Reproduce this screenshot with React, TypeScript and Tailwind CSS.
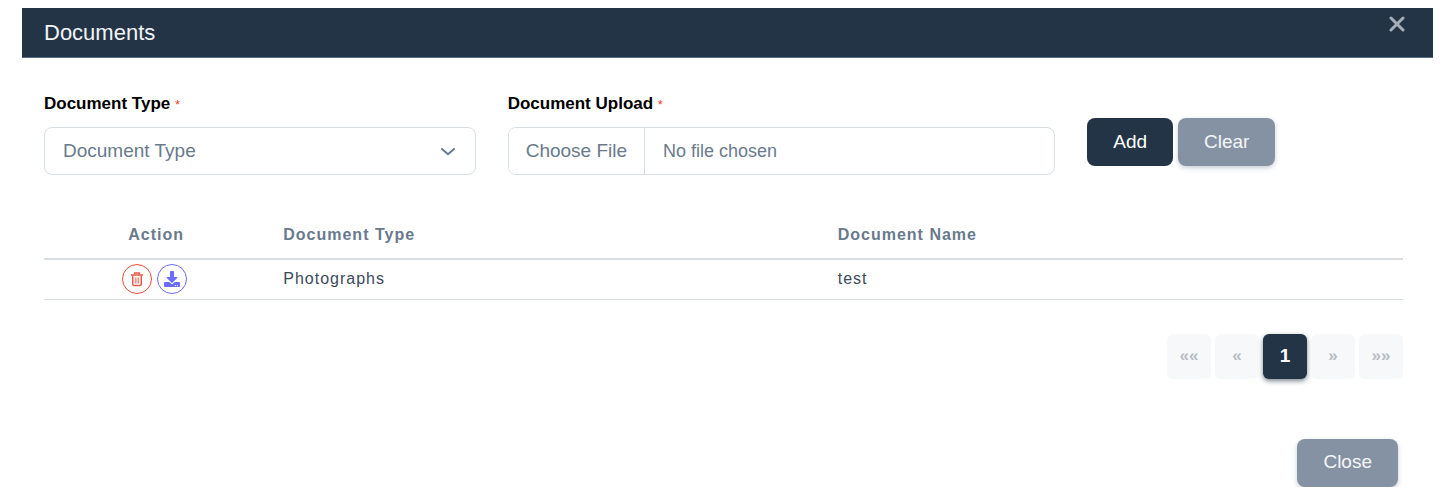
import React from "react";
import { FaDownload } from "react-icons/fa";

const rows = [{ type: "Photographs", name: "test" }];

const pages = [
  { label: "««", title: "First" },
  { label: "«", title: "Previous" },
  { label: "1", title: "Page 1", current: true },
  { label: "»", title: "Next" },
  { label: "»»", title: "Last" },
];

function TrashIcon() {
  return (
    <svg viewBox="0 0 14 16" className="h-4 w-3.5" fill="none" stroke="currentColor" aria-hidden="true">
      <path d="M1 4h12" strokeWidth="1.500" />
      <path d="M4.500 3.500V2h5v1.500" strokeWidth="1.300" />
      <path d="M2.700 4.500V13a1.500 1.500 0 0 0 1.500 1.500h5.600a1.500 1.500 0 0 0 1.500-1.500V4.500" strokeWidth="1.500" />
      <path d="M5.300 6.500v6M7 6.500v6M8.700 6.500v6" strokeWidth=".8" />
    </svg>
  );
}

function Required() {
  return <span className="text-[13px] font-normal text-[#ff3e1d]">*</span>;
}

export default function App() {
  return (
    <div className="bg-white pt-2 pr-4 pl-[22px] font-['Liberation_Sans',Arial,sans-serif] text-[19px] text-[#697a8d]">
      <header className="flex items-start justify-between border-b border-[#566a7f] bg-[#233446] pr-7 pl-[22px]">
        <h1 className="pt-[9px] pb-2 text-[22px] leading-8 text-[#f2f4f6]">Documents</h1>
        <button type="button" aria-label="Close dialog" className="mt-2 text-[#a7afb8]">
          <svg viewBox="0 0 16 16" className="size-4" fill="none" stroke="currentColor" strokeWidth="3" strokeLinecap="round">
            <path d="M2 2l12 12M14 2L2 14" />
          </svg>
        </button>
      </header>

      <main className="pr-[30px] pl-[22px]">
        <form className="grid grid-cols-12 gap-8 pt-8">
          <div className="col-span-4">
            <label htmlFor="type" className="mb-2 block text-[17px] leading-7 font-bold text-black">
              Document Type <Required />
            </label>
            <div className="relative">
              <select id="type" className="block h-12 w-full appearance-none rounded-lg border border-[#d9dee3] bg-white px-[18px] outline-none">
                <option>Document Type</option>
                <option>Photographs</option>
              </select>
              <svg viewBox="0 0 16 16" className="pointer-events-none absolute top-4 right-5 size-4" fill="none" stroke="currentColor" strokeWidth="1.900" strokeLinecap="round" strokeLinejoin="round">
                <path d="M2 6l6 5.300L14 6" />
              </svg>
            </div>
          </div>
          <div className="col-span-5">
            <label htmlFor="upload" className="mb-2 block text-[17px] leading-7 font-bold text-black">
              Document Upload <Required />
            </label>
            <input
              id="upload"
              type="file"
              className="block h-12 w-full overflow-hidden rounded-lg border border-[#d9dee3] bg-white text-[18px] leading-[46px] file:mr-[18px] file:h-[46px] file:border-0 file:border-r file:border-solid file:border-[#d9dee3] file:bg-white file:px-[17px] file:text-[19px] file:text-[#697a8d]"
            />
          </div>
          <div className="col-span-3 flex items-start gap-[5px] pt-7">
            <button type="button" className="h-12 rounded-lg bg-[#233446] px-[26px] text-white">Add</button>
            <button type="reset" className="h-12 rounded-lg bg-[#8592a3] px-[26px] text-[#f5f6f8] shadow-[0_2px_5px_rgba(133,146,163,0.45)]">Clear</button>
          </div>
        </form>

        <table className="mt-9 w-full table-fixed border-collapse text-left text-[16px] tracking-[1px]">
          <thead>
            <tr className="h-12 border-b-2 border-[#d9dee3]">
              <th className="w-[16.5%] text-center">Action</th>
              <th className="w-[40.8%] pl-[15px]">Document Type</th>
              <th className="pl-[15px]">Document Name</th>
            </tr>
          </thead>
          <tbody className="text-[#3b4a5a]">
            {rows.map((row) => (
              <tr key={row.name} className="h-10 border-b border-[#d9dee3]">
                <td className="pr-1">
                  <div className="flex justify-center gap-[5px]">
                    <button type="button" aria-label="Delete" className="flex size-[30px] items-center justify-center rounded-full border border-[#e74c3c] text-[#e05a48]">
                      <TrashIcon />
                    </button>
                    <button type="button" aria-label="Download" className="flex size-[30px] items-center justify-center rounded-full border border-[#696cff] text-[#696cff]">
                      <FaDownload className="size-4" />
                    </button>
                  </div>
                </td>
                <td className="pl-[15px]">{row.type}</td>
                <td className="pl-[15px]">{row.name}</td>
              </tr>
            ))}
          </tbody>
        </table>

        <nav aria-label="Pagination" className="mt-[34px] flex justify-end gap-1">
          {pages.map((page) => (
            <button
              key={page.title}
              type="button"
              aria-label={page.title}
              className={
                page.current
                  ? "h-[45px] w-11 rounded-md bg-[#233446] font-bold text-white shadow-[0_2px_5px_rgba(35,52,70,0.6)]"
                  : "h-[45px] w-11 rounded-md bg-[#f7f8f9] text-[17px] font-bold text-[#b4bdc6]"
              }
            >
              {page.label}
            </button>
          ))}
        </nav>
      </main>

      <footer className="mt-[60px] flex justify-end pr-[35px]">
        <button type="button" className="h-12 rounded-lg bg-[#8592a3] px-[26px] text-[#f5f6f8] shadow-[0_2px_5px_rgba(133,146,163,0.45)]">Close</button>
      </footer>
    </div>
  );
}
